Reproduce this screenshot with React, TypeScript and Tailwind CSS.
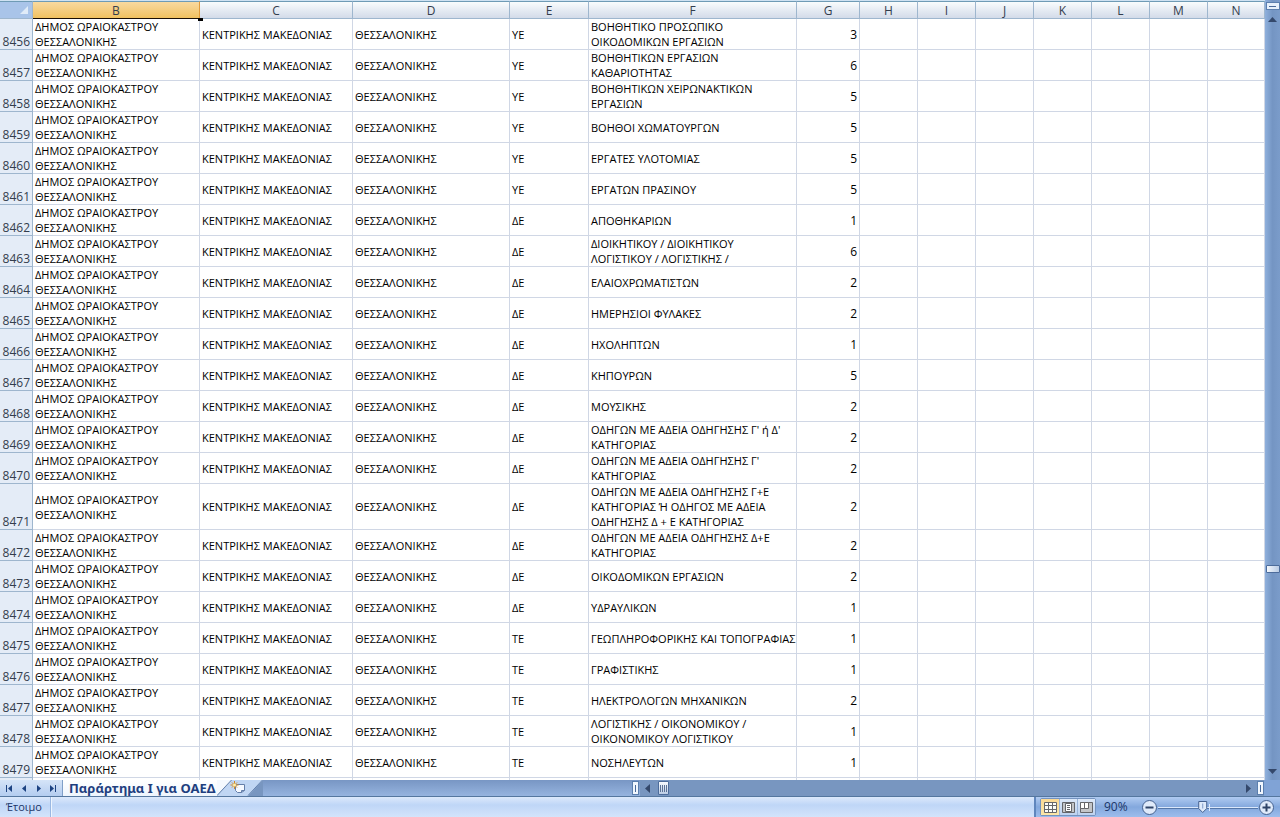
import React, { useState } from 'react';
import clsx from 'clsx';

interface Row {
  id: number;
  level: string;
  title: string[];
  count: number;
}

const ROWS: Row[] = [
  { id: 8456, level: 'ΥΕ', title: ['ΒΟΗΘΗΤΙΚΟ ΠΡΟΣΩΠΙΚΟ', 'ΟΙΚΟΔΟΜΙΚΩΝ ΕΡΓΑΣΙΩΝ'], count: 3 },
  { id: 8457, level: 'ΥΕ', title: ['ΒΟΗΘΗΤΙΚΩΝ ΕΡΓΑΣΙΩΝ', 'ΚΑΘΑΡΙΟΤΗΤΑΣ'], count: 6 },
  { id: 8458, level: 'ΥΕ', title: ['ΒΟΗΘΗΤΙΚΩΝ ΧΕΙΡΩΝΑΚΤΙΚΩΝ', 'ΕΡΓΑΣΙΩΝ'], count: 5 },
  { id: 8459, level: 'ΥΕ', title: ['ΒΟΗΘΟΙ ΧΩΜΑΤΟΥΡΓΩΝ'], count: 5 },
  { id: 8460, level: 'ΥΕ', title: ['ΕΡΓΑΤΕΣ ΥΛΟΤΟΜΙΑΣ'], count: 5 },
  { id: 8461, level: 'ΥΕ', title: ['ΕΡΓΑΤΩΝ ΠΡΑΣΙΝΟΥ'], count: 5 },
  { id: 8462, level: 'ΔΕ', title: ['ΑΠΟΘΗΚΑΡΙΩΝ'], count: 1 },
  { id: 8463, level: 'ΔΕ', title: ['ΔΙΟΙΚΗΤΙΚΟΥ / ΔΙΟΙΚΗΤΙΚΟΥ', 'ΛΟΓΙΣΤΙΚΟΥ / ΛΟΓΙΣΤΙΚΗΣ /'], count: 6 },
  { id: 8464, level: 'ΔΕ', title: ['ΕΛΑΙΟΧΡΩΜΑΤΙΣΤΩΝ'], count: 2 },
  { id: 8465, level: 'ΔΕ', title: ['ΗΜΕΡΗΣΙΟΙ ΦΥΛΑΚΕΣ'], count: 2 },
  { id: 8466, level: 'ΔΕ', title: ['ΗΧΟΛΗΠΤΩΝ'], count: 1 },
  { id: 8467, level: 'ΔΕ', title: ['ΚΗΠΟΥΡΩΝ'], count: 5 },
  { id: 8468, level: 'ΔΕ', title: ['ΜΟΥΣΙΚΗΣ'], count: 2 },
  { id: 8469, level: 'ΔΕ', title: ["ΟΔΗΓΩΝ ΜΕ ΑΔΕΙΑ ΟΔΗΓΗΣΗΣ Γ' ή Δ'", 'ΚΑΤΗΓΟΡΙΑΣ'], count: 2 },
  { id: 8470, level: 'ΔΕ', title: ["ΟΔΗΓΩΝ ΜΕ ΑΔΕΙΑ ΟΔΗΓΗΣΗΣ Γ'", 'ΚΑΤΗΓΟΡΙΑΣ'], count: 2 },
  { id: 8471, level: 'ΔΕ', title: ['ΟΔΗΓΩΝ ΜΕ ΑΔΕΙΑ ΟΔΗΓΗΣΗΣ Γ+Ε', 'ΚΑΤΗΓΟΡΙΑΣ Ή ΟΔΗΓΟΣ ΜΕ ΑΔΕΙΑ', 'ΟΔΗΓΗΣΗΣ Δ + Ε ΚΑΤΗΓΟΡΙΑΣ'], count: 2 },
  { id: 8472, level: 'ΔΕ', title: ['ΟΔΗΓΩΝ ΜΕ ΑΔΕΙΑ ΟΔΗΓΗΣΗΣ Δ+Ε', 'ΚΑΤΗΓΟΡΙΑΣ'], count: 2 },
  { id: 8473, level: 'ΔΕ', title: ['ΟΙΚΟΔΟΜΙΚΩΝ ΕΡΓΑΣΙΩΝ'], count: 2 },
  { id: 8474, level: 'ΔΕ', title: ['ΥΔΡΑΥΛΙΚΩΝ'], count: 1 },
  { id: 8475, level: 'ΤΕ', title: ['ΓΕΩΠΛΗΡΟΦΟΡΙΚΗΣ ΚΑΙ ΤΟΠΟΓΡΑΦΙΑΣ'], count: 1 },
  { id: 8476, level: 'ΤΕ', title: ['ΓΡΑΦΙΣΤΙΚΗΣ'], count: 1 },
  { id: 8477, level: 'ΤΕ', title: ['ΗΛΕΚΤΡΟΛΟΓΩΝ ΜΗΧΑΝΙΚΩΝ'], count: 2 },
  { id: 8478, level: 'ΤΕ', title: ['ΛΟΓΙΣΤΙΚΗΣ / ΟΙΚΟΝΟΜΙΚΟΥ /', 'ΟΙΚΟΝΟΜΙΚΟΥ ΛΟΓΙΣΤΙΚΟΥ'], count: 1 },
  { id: 8479, level: 'ΤΕ', title: ['ΝΟΣΗΛΕΥΤΩΝ'], count: 1 },
];

const COLUMNS = [
  { name: 'B', width: 'w-[167px]' },
  { name: 'C', width: 'w-[153px]' },
  { name: 'D', width: 'w-[157px]' },
  { name: 'E', width: 'w-[79px]' },
  { name: 'F', width: 'w-[208px]' },
  { name: 'G', width: 'w-[63px]' },
  { name: 'H', width: 'w-[58px]' },
  { name: 'I', width: 'w-[58px]' },
  { name: 'J', width: 'w-[58px]' },
  { name: 'K', width: 'w-[58px]' },
  { name: 'L', width: 'w-[58px]' },
  { name: 'M', width: 'w-[58px]' },
  { name: 'N', width: 'w-auto' },
];

const EMPTY = ['H', 'I', 'J', 'K', 'L', 'M', 'N'];

const Cell: React.FC<{ children?: React.ReactNode; className?: string }> = ({ children, className }) => (
  <td className={clsx('border-r border-b border-[#d0d7e5] p-0 px-0.5 align-middle whitespace-nowrap', className)}>
    {children}
  </td>
);

const Sheet: React.FC = () => (
  <table className="w-full table-fixed border-separate border-spacing-0 font-['Open_Sans',sans-serif] text-[11px] leading-[15px] text-black">
    <colgroup>
      <col className="w-[33px]" />
      {COLUMNS.map((c) => (
        <col key={c.name} className={c.width} />
      ))}
    </colgroup>
    <thead>
      <tr className="h-[18px] text-[12px] text-[#333d4d]">
        <th className="border-t border-r border-b border-t-[#6f9bb5] border-r-[#9eb6ce] border-b-[#9eb6ce] bg-[#a9c4e9] p-0 pr-1">
          <svg className="ml-auto h-2 w-2" viewBox="0 0 8 8" aria-hidden="true">
            <path d="M8 0v8H0z" fill="#e0ebf8" />
          </svg>
        </th>
        {COLUMNS.map((c) => (
          <th
            key={c.name}
            scope="col"
            className={clsx(
              'border-t border-r border-b border-t-[#6f9bb5] p-0 font-normal',
              c.name === 'B'
                ? 'border-r-[#e09a3c] border-b-[#1a0f05] bg-linear-to-b from-[#f9d99f] to-[#f1c15f]'
                : 'border-r-[#9eb6ce] border-b-[#9eb6ce] bg-linear-to-b from-[#f9fcfd] to-[#d3dbe9]',
            )}
          >
            {c.name}
          </th>
        ))}
      </tr>
    </thead>
    <tbody>
      {ROWS.map((row, i) => (
        <tr key={row.id} className="h-[31px]">
          <th
            scope="row"
            className="border-r border-b border-[#9eb6ce] bg-[#e4ecf7] p-0 pr-0.5 text-right align-bottom text-[12px] font-normal text-[#333d4d]"
          >
            {row.id}
          </th>
          <Cell className="relative">
            ΔΗΜΟΣ ΩΡΑΙΟΚΑΣΤΡΟΥ
            <br />
            ΘΕΣΣΑΛΟΝΙΚΗΣ
            {/* fill handle of the selection above */}
            {i === 0 && <span className="absolute -top-px -right-1 h-[3px] w-[5px] bg-black" />}
          </Cell>
          <Cell>ΚΕΝΤΡΙΚΗΣ ΜΑΚΕΔΟΝΙΑΣ</Cell>
          <Cell>ΘΕΣΣΑΛΟΝΙΚΗΣ</Cell>
          <Cell>{row.level}</Cell>
          <Cell>
            {row.title.map((line) => (
              <div key={line}>{line}</div>
            ))}
          </Cell>
          <Cell className="text-right text-[12px]">{row.count}</Cell>
          {EMPTY.map((name) => (
            <Cell key={name} />
          ))}
        </tr>
      ))}
      <tr className="h-[31px]">
        <th className="border-r border-[#9eb6ce] bg-[#e4ecf7]" />
        {COLUMNS.map((c) => (
          <Cell key={c.name} />
        ))}
      </tr>
    </tbody>
  </table>
);

const Arrow: React.FC<{ d: string; label: string; className?: string }> = ({ d, label, className }) => (
  <button type="button" aria-label={label} className={clsx('flex shrink-0 items-center justify-center', className)}>
    <svg className="h-[9px] w-[9px]" viewBox="0 0 9 9" aria-hidden="true">
      <path d={d} fill="currentColor" />
    </svg>
  </button>
);

const VerticalScroll: React.FC = () => (
  <div className="flex w-[15px] shrink-0 flex-col items-center bg-linear-to-r from-[#8fb0dc] via-[#7495c3] to-[#7b9cca] text-[#34486b]">
    <div className="mt-0.5 flex h-2 w-[14px] items-center justify-center border border-[#5b7fae] bg-[#e6f0fb]">
      <span className="h-px w-[7px] bg-[#4a6a99]" />
    </div>
    <Arrow label="Πάνω" d="M0 7l4.500-5L9 7z" className="h-[18px] w-full" />
    <div className="flex-[537]" />
    <div className="h-2 w-[14px] shrink-0 rounded-[1px] border border-[#4d6c9b] bg-linear-to-r from-[#f4f8fd] to-[#b9cbe4]" />
    <div className="flex-[189]" />
    <Arrow label="Κάτω" d="M0 2l4.500 5L9 2z" className="h-[18px] w-full" />
  </div>
);

const SheetTabs: React.FC = () => (
  <div className="flex h-[17px] shrink-0 items-stretch border-b border-[#55779f] bg-[#7896c0]">
    <div className="flex w-[63px] shrink-0 items-center border-r border-[#7f9fc8] bg-linear-to-b from-[#d5e4f8] to-[#b4cdf0] pl-0.5 text-[#1d4382]">
      <Arrow label="Πρώτο φύλλο" className="w-[15px]" d="M1 1h1v7H1zM7 1v7L3 4.500z" />
      <Arrow label="Προηγούμενο" className="w-[15px]" d="M6 1v7L2 4.500z" />
      <Arrow label="Επόμενο" className="w-[13px]" d="M3 1v7l4-3.500z" />
      <Arrow label="Τελευταίο φύλλο" className="w-[15px]" d="M2 1v7l4-3.500zM7 1h1v7H7z" />
    </div>
    <button
      type="button"
      className="shrink-0 bg-linear-to-b from-white to-[#eef5fd] pr-0.5 pl-1.5 font-['Noto_Sans',sans-serif] text-[13px] leading-4 font-bold whitespace-nowrap text-[#1f3f7f]"
    >
      Παράρτημα I για ΟΑΕΔ
    </button>
    <button type="button" aria-label="Εισαγωγή φύλλου" className="shrink-0">
      <svg className="h-4 w-[46px]" viewBox="0 0 46 16" aria-hidden="true">
        <path d="M0 0h15L0 16z" fill="#f4f9fe" />
        <path d="M15 0h31L31 16H0z" fill="#c0d6f3" />
        <path d="M14.500 0L0 15.500M45.500 0L31 15.500" fill="none" stroke="#6482ad" />
        <path d="M19.500 4.500h8v6h-3v2h-4l-2-2v-4z" fill="#f5f9ff" stroke="#647ea8" />
        <path d="M24.500 12.500l3-2" stroke="#647ea8" />
        <path d="M17.500 1v8M13.500 5h8M15 2.500l5 5M20 2.500l-5 5" stroke="#d48a22" />
        <circle cx="17.500" cy="5" r="1.500" fill="#fff1a8" />
      </svg>
    </button>
    <div className="flex-1 bg-linear-to-b from-[#7896c4] to-[#96b4df]" />
    {/* horizontal scroll bar, about half of the window */}
    <div className="flex w-1/2 shrink-0 items-center text-[#34486b]">
      <div className="-ml-2 flex h-[14px] w-[7px] shrink-0 items-center justify-center border border-[#5b7fae] bg-[#f1f7fe]">
        <span className="h-[7px] w-px bg-[#4a6a99]" />
      </div>
      <Arrow label="Αριστερά" d="M7 0v9L2 4.500z" className="h-4 w-[17px]" />
      <div className="ml-0.5 flex h-[14px] w-[11px] shrink-0 items-center justify-center gap-px rounded-[1px] border border-[#4d6c9b] bg-linear-to-b from-[#f7fafe] to-[#bccde5]">
        <span className="h-[7px] w-px bg-[#5d7396]" />
        <span className="h-[7px] w-px bg-[#5d7396]" />
        <span className="h-[7px] w-px bg-[#5d7396]" />
        <span className="h-[7px] w-px bg-[#5d7396]" />
      </div>
      <div className="flex-1" />
      <Arrow label="Δεξιά" d="M2 0v9l5-4.500z" className="h-4 w-[17px]" />
      <div className="flex h-[14px] w-[7px] shrink-0 items-center justify-center border border-[#5b7fae] bg-[#f1f7fe]">
        <span className="h-[7px] w-px bg-[#4a6a99]" />
      </div>
      <div className="h-4 w-4 shrink-0 bg-[#80a3d6]" />
    </div>
  </div>
);

const VIEWS = [
  { name: 'Κανονική', back: '#fdfdf8', frame: 'M.5.5h12v10H.5z', front: 'none', detail: 'M.5 3.500h12M.5 7.500h12M4.500.5v10M8.500.5v10' },
  { name: 'Διάταξη σελίδας', back: '#c3c5c8', frame: 'M.5.5h12v10H.5z', front: '#fff', detail: 'M3.500 1.500h6v8h-6zM5 3.500h3M5 5.500h3M5 7.500h3' },
  { name: 'Αλλαγές σελίδων', back: '#c3c5c8', frame: 'M.5.5h12v10H.5z', front: '#fff', detail: 'M.5.5h4v6h-4zM4.500.5h4v6h-4z' },
];

const StatusBar: React.FC = () => {
  const [zoom, setZoom] = useState(90);
  const [view, setView] = useState('Κανονική');

  // 10-100 covers the left half of the track, 100-400 the right half
  const pos = zoom <= 100 ? ((zoom - 10) / 90) * 52 : 52 + ((zoom - 100) / 300) * 38;

  return (
    <footer className="flex h-5 shrink-0 items-stretch bg-linear-to-b from-[#dce9fb] via-[#bfd6f7] via-40% to-[#d3e4fb] font-['Open_Sans',sans-serif] text-[11px] text-[#1a3568]">
      <div className="flex w-[51px] items-center border-r border-[#9ab8e2] pl-1.5">Έτοιμο</div>
      <div className="flex-1 border-l border-[#eef5fe]" />
      <div className="flex shrink-0 items-center border-l-2 border-[#5f86bd] bg-linear-to-b from-[#b0cbf1] via-[#83a8dd] via-50% to-[#9dbdec] pl-1">
        <div className="flex h-[18px] items-stretch rounded-xs border border-[#7593bf]">
          {VIEWS.map((v) => (
            <button
              key={v.name}
              type="button"
              aria-label={v.name}
              aria-pressed={view === v.name}
              onClick={() => setView(v.name)}
              className={clsx(
                'flex w-[18px] items-center justify-center',
                view === v.name
                  ? 'bg-linear-to-b from-[#fbd994] to-[#fbe6a8]'
                  : 'border-l border-[#9ab4da] bg-linear-to-b from-[#dce8f8] to-[#bdd2ef]',
              )}
            >
              <svg className="h-[11px] w-[13px]" viewBox="0 0 13 11" stroke="#65666a" aria-hidden="true">
                <path d={v.frame} fill={v.back} />
                <path d={v.detail} fill={v.front} />
              </svg>
            </button>
          ))}
        </div>
        <span className="w-[45px] pl-2 text-[12px]">{zoom}%</span>
        <button type="button" aria-label="Σμίκρυνση" onClick={() => setZoom(Math.max(10, zoom - 10))}>
          <svg className="h-[17px] w-[17px]" viewBox="0 0 17 17" aria-hidden="true">
            <circle cx="8.500" cy="8.500" r="7" fill="#dfeafa" stroke="#44618f" />
            <path d="M4.500 8.500h8" stroke="#2f4468" strokeWidth="2" />
          </svg>
        </button>
        <div className="relative h-[17px] w-[100px]">
          <svg className="h-[17px] w-full" viewBox="0 0 100 17" aria-hidden="true">
            <path d="M0 8.500h100" stroke="#dbe8fb" />
            <path d="M0 9.500h100" stroke="#5577a8" />
            <path d="M51.500 5v7" stroke="#dbe8fb" />
            <g style={{ transform: `translateX(${pos - 6}px)` }}>
              <path d="M.5 2.500h8v7l-4 4-4-4z" fill="#dfeafa" stroke="#44618f" />
              <path d="M4.500 4.500v5" stroke="#7f9cc8" />
            </g>
          </svg>
          <input
            type="range"
            aria-label="Ζουμ"
            min={10}
            max={400}
            step={10}
            value={zoom}
            onChange={(e) => setZoom(Number(e.target.value))}
            className="absolute inset-0 w-full cursor-pointer opacity-0"
          />
        </div>
        <button type="button" aria-label="Μεγέθυνση" onClick={() => setZoom(Math.min(400, zoom + 10))} className="mr-[5px]">
          <svg className="h-[17px] w-[17px]" viewBox="0 0 17 17" aria-hidden="true">
            <circle cx="8.500" cy="8.500" r="7" fill="#dfeafa" stroke="#44618f" />
            <path d="M4.500 8.500h8M8.500 4.500v8" stroke="#2f4468" strokeWidth="2" />
          </svg>
        </button>
      </div>
    </footer>
  );
};

const App: React.FC = () => (
  <div className="flex h-screen flex-col overflow-hidden bg-white">
    <main className="flex min-h-0 flex-1">
      <div className="min-w-0 flex-1 overflow-hidden border-t border-[#cfe2f2]">
        <Sheet />
      </div>
      <VerticalScroll />
    </main>
    <SheetTabs />
    <StatusBar />
  </div>
);

export default App;
